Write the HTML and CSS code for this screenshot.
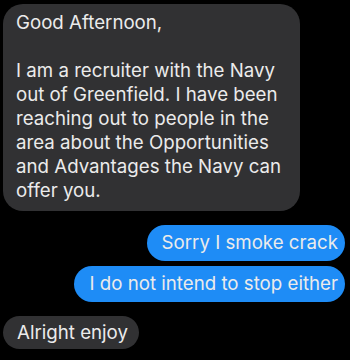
FILE: index.html
```html
<!DOCTYPE html>
<html lang="en">
<head>
    <meta charset="UTF-8">
    <meta name="viewport" content="width=device-width, initial-scale=1.0">
    <title>Messages</title>
    <link rel="stylesheet" href="styles.css">
</head>
<body>

<div class="thread">
    <div class="bubble received first">
        Good Afternoon,<br>
        <br>
        I am a recruiter with the Navy<br>
        out of Greenfield. I have been<br>
        reaching out to people in the<br>
        area about the Opportunities<br>
        and Advantages the Navy can<br>
        offer you.
    </div>
    <div class="bubble sent">Sorry I smoke crack</div>
    <div class="bubble sent second">I do not intend to stop either</div>
    <div class="bubble received last">Alright enjoy</div>
</div>

</body>
</html>
```

FILE: styles.css
```css
body,
html {
    margin: 0;
    background-color: #000000;
    font-family: Inter, "Liberation Sans", Arial, sans-serif;
}
.thread {
    display: flex;
    flex-direction: column;
    padding: 4px 5px 0 3px;
}
.bubble {
    font-size: 18.7px;
    line-height: 24px;
    color: #ebebeb;
    border-radius: 18px;
}
.received {
    align-self: flex-start;
    background-color: #313133;
}
.sent {
    align-self: flex-end;
    background-color: #1e8cf6;
    padding: 6px 7px 6px 15px;
    margin-top: 14px;
}
.first {
    width: 284px;
    padding: 7px 0 8px 13px;
    border-radius: 20px;
}
.second {
    margin-top: 5px;
}
.last {
    margin-top: 14px;
    padding: 5px 11px 4px 14px;
}
```
